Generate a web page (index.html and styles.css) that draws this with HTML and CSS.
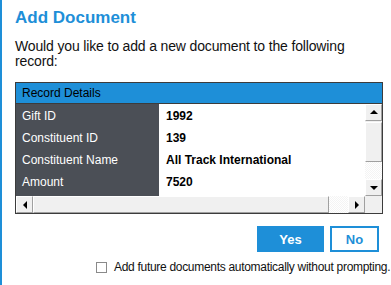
FILE: index.html
```html
<!DOCTYPE html>
<html lang="en">
<head>
    <meta charset="UTF-8">
    <meta name="viewport" content="width=device-width, initial-scale=1.0">
    <title>Add Document</title>
    <link rel="stylesheet" href="styles.css">
</head>
<body>

    <div class="dialog">
        <h2 class="title">Add Document</h2>
        <p class="prompt">Would you like to add a new document to the following record:</p>

        <!-- Record Details grid -->
        <div class="grid">
            <div class="grid-header">Record Details</div>
            <div class="grid-body">
                <div class="rows">
                    <div class="row"><span class="label">Gift ID</span><span class="value">1992</span></div>
                    <div class="row"><span class="label">Constituent ID</span><span class="value">139</span></div>
                    <div class="row"><span class="label">Constituent Name</span><span class="value">All Track International</span></div>
                    <div class="row"><span class="label">Amount</span><span class="value">7520</span></div>
                    <div class="row"><span class="label"></span><span class="value"></span></div>
                </div>
                <div class="vscroll">
                    <div class="sb-btn"><span class="arrow up"></span></div>
                    <div class="vthumb"></div>
                    <div class="vtrack"></div>
                    <div class="sb-btn"><span class="arrow down"></span></div>
                </div>
            </div>
            <div class="grid-foot">
                <div class="hscroll">
                    <div class="sb-btn"><span class="arrow left"></span></div>
                    <div class="hthumb"></div>
                    <div class="htrack"></div>
                    <div class="sb-btn"><span class="arrow right"></span></div>
                </div>
                <div class="corner"></div>
            </div>
        </div>

        <div class="actions">
            <button class="btn btn-yes">Yes</button>
            <button class="btn btn-no">No</button>
        </div>

        <label class="auto-add">
            <span class="check"></span>
            Add future documents automatically without prompting.
        </label>
    </div>

</body>
</html>
```

FILE: styles.css
```css
body {
    margin: 0;
    background: #fff;
    font-family: Arial, "Liberation Sans", sans-serif;
    color: #111;
}

.dialog {
    height: 285px;
    box-sizing: border-box;
    border-left: 2px solid #1e8fd8;
    padding: 8px 0 0 13px;
    overflow: hidden;
}

.title {
    margin: 0;
    font-size: 17px;
    font-weight: bold;
    color: #1e8fd8;
    line-height: 20px;
}

.prompt {
    margin: 11px 0 0;
    font-size: 14px;
    letter-spacing: -0.15px;
    line-height: 15px;
    width: 360px;
}

.grid {
    margin-top: 13px;
    width: 366px;
    border: 1px solid #3c3c3c;
}

.grid-header {
    height: 20px;
    line-height: 20px;
    background: #1e8fd8;
    border-bottom: 1px solid #3c3c3c;
    font-size: 12px;
    padding-left: 6px;
    color: #000;
}

.grid-body {
    display: flex;
    height: 92px;
}

.rows {
    flex: 1;
    overflow: hidden;
    padding-top: 1px;
    background: #fff;
}

.row {
    display: flex;
    height: 22px;
    line-height: 22px;
    font-size: 12px;
}

.label {
    width: 137px;
    padding-left: 6px;
    background: #4b4f56;
    color: #fff;
    flex-shrink: 0;
}

.row:first-child .label {
    margin-top: -1px;
    padding-top: 1px;
}

.value {
    padding-left: 7px;
    font-weight: bold;
    color: #000;
}

.vscroll {
    width: 17px;
    display: flex;
    flex-direction: column;
    background: #f0f0f0;
}

.sb-btn {
    width: 17px;
    height: 17px;
    box-sizing: border-box;
    background: #f0f0f0;
    border: 1px solid #fff;
    border-right-color: #a0a0a0;
    border-bottom-color: #a0a0a0;
    display: flex;
    align-items: center;
    justify-content: center;
    flex-shrink: 0;
}

.vthumb {
    height: 40px;
    margin-top: 1px;
    box-sizing: border-box;
    background: #f0f0f0;
    border: 1px solid #fff;
    border-right-color: #a0a0a0;
    border-bottom-color: #a0a0a0;
}

.vtrack,
.htrack {
    flex: 1;
    background: repeating-conic-gradient(#f4f4f4 0 25%, #fff 0 50%) 0 0 / 2px 2px;
}

.arrow {
    width: 0;
    height: 0;
    border: 4px solid transparent;
}

.arrow.up {
    border-bottom-color: #000;
    border-top-width: 0;
    margin-top: -1px;
}

.arrow.down {
    border-top-color: #000;
    border-bottom-width: 0;
}

.arrow.left {
    border-right-color: #000;
    border-left-width: 0;
}

.arrow.right {
    border-left-color: #000;
    border-right-width: 0;
}

.grid-foot {
    display: flex;
    height: 17px;
}

.hscroll {
    flex: 1;
    display: flex;
    background: #f0f0f0;
}

.hthumb {
    width: 296px;
    box-sizing: border-box;
    background: #f0f0f0;
    border: 1px solid #fff;
    border-right-color: #a0a0a0;
    border-bottom-color: #a0a0a0;
}

.corner {
    width: 17px;
    background: #f0f0f0;
}

.actions {
    display: flex;
    justify-content: flex-end;
    gap: 6px;
    margin-top: 12px;
    width: 364px;
}

.btn {
    height: 26px;
    font-family: Arial, "Liberation Sans", sans-serif;
    font-size: 13px;
    font-weight: bold;
    cursor: pointer;
    padding: 0;
}

.btn-yes {
    width: 67px;
    background: #1e8fd8;
    color: #fff;
    border: none;
}

.btn-no {
    width: 49px;
    background: #fff;
    color: #1e8fd8;
    border: 2px solid #1e8fd8;
}

.auto-add {
    display: flex;
    align-items: center;
    gap: 7px;
    margin: 8px 0 0 81px;
    font-size: 12px;
    letter-spacing: -0.3px;
    line-height: 14px;
    white-space: nowrap;
}

.check {
    width: 11px;
    height: 11px;
    flex-shrink: 0;
    box-sizing: border-box;
    border: 1px solid #8a8a8a;
    background: #fff;
}
```
